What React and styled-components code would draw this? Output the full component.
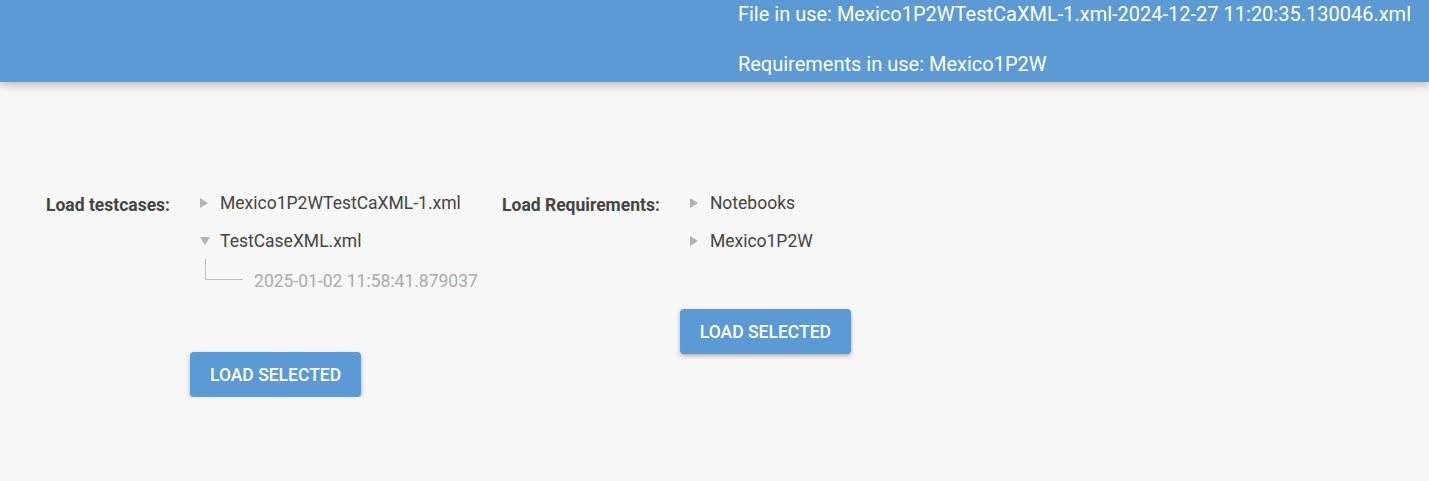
import React from 'react'
import styled, { createGlobalStyle } from 'styled-components'

const GlobalStyle = createGlobalStyle`
  html, body {
    margin: 0;
    padding: 0;
    background: #f7f7f7;
    font-family: Roboto, "Liberation Sans", sans-serif;
  }
`

function Arrow({ open }) {
  return open ? (
    <Caret width="10" height="8" viewBox="0 0 10 8">
      <path d="M0 0 L10 0 L5 8 Z" fill="#b3b3b3" />
    </Caret>
  ) : (
    <Caret width="8" height="10" viewBox="0 0 8 10">
      <path d="M0 0 L8 5 L0 10 Z" fill="#b3b3b3" />
    </Caret>
  )
}

function TreeNode({ label, open, children }) {
  return (
    <>
      <Row>
        <ArrowSlot><Arrow open={open} /></ArrowSlot>
        <NodeText>{label}</NodeText>
      </Row>
      {open && children}
    </>
  )
}

function App() {
  return (
    <>
      <GlobalStyle />
      <Header>
        <HeaderInfo>
          <HeaderLine>File in use: Mexico1P2WTestCaXML-1.xml-2024-12-27 11:20:35.130046.xml</HeaderLine>
          <HeaderLine>Requirements in use: Mexico1P2W</HeaderLine>
        </HeaderInfo>
      </Header>

      <Main>
        <Section>
          <Label>Load testcases:</Label>
          <Column>
            <Tree>
              <TreeNode label="Mexico1P2WTestCaXML-1.xml" />
              <TreeNode label="TestCaseXML.xml" open>
                <ChildRow>
                  <Connector />
                  <ChildText>2025-01-02 11:58:41.879037</ChildText>
                </ChildRow>
              </TreeNode>
            </Tree>
            <Button>Load selected</Button>
          </Column>
        </Section>

        <Section>
          <Label>Load Requirements:</Label>
          <Column>
            <Tree>
              <TreeNode label="Notebooks" />
              <TreeNode label="Mexico1P2W" />
            </Tree>
            <Button>Load selected</Button>
          </Column>
        </Section>
      </Main>
    </>
  )
}

export default App

const Header = styled.header`
    height: 82px;
    background: #5b9ad5;
    box-shadow: 0 2px 10px rgba(0, 0, 0, 0.3);
    display: flex;
    justify-content: flex-end;
    padding-right: 18px;
    color: #fff;
`

const HeaderInfo = styled.div`
    display: flex;
    flex-direction: column;
    gap: 22px;
`

const HeaderLine = styled.div`
    font-size: 20px;
    line-height: 28px;
`

const Main = styled.main`
    display: flex;
    padding: 102px 0 0 46px;
    gap: 24px;
`

const Section = styled.div`
    display: flex;
    align-items: flex-start;
`

const Label = styled.div`
    font-size: 17.5px;
    font-weight: 700;
    color: #444;
    line-height: 20px;
    padding-top: 11px;
    margin-right: 20px;
`

const Column = styled.div`
    display: flex;
    flex-direction: column;
    align-items: flex-start;
`

const Tree = styled.div`
    display: flex;
    flex-direction: column;
    margin-bottom: 49px;
    min-width: 288px;
`

const Row = styled.div`
    height: 38px;
    display: flex;
    align-items: center;
`

const ArrowSlot = styled.span`
    width: 30px;
    padding-left: 10px;
    box-sizing: border-box;
    display: flex;
    align-items: center;
`

const Caret = styled.svg`
    display: block;
`

const NodeText = styled.span`
    font-size: 17.5px;
    color: #444;
`

const ChildRow = styled.div`
    height: 43px;
    display: flex;
    align-items: flex-start;
`

const Connector = styled.span`
    width: 37px;
    height: 20px;
    margin: -1px 0 0 15px;
    border-left: 1px solid #bdbdbd;
    border-bottom: 1px solid #bdbdbd;
`

const ChildText = styled.span`
    font-size: 17.5px;
    line-height: 20px;
    padding-top: 11px;
    margin-left: 11px;
    color: #ababab;
`

const Button = styled.button`
    width: 171px;
    height: 45px;
    border: none;
    border-radius: 4px;
    background: #5b9ad5;
    color: #fff;
    font-family: Roboto, "Liberation Sans", sans-serif;
    font-size: 17.5px;
    font-weight: 500;
    text-transform: uppercase;
    box-shadow: 0 2px 4px rgba(0, 0, 0, 0.3);
    cursor: pointer;
`
